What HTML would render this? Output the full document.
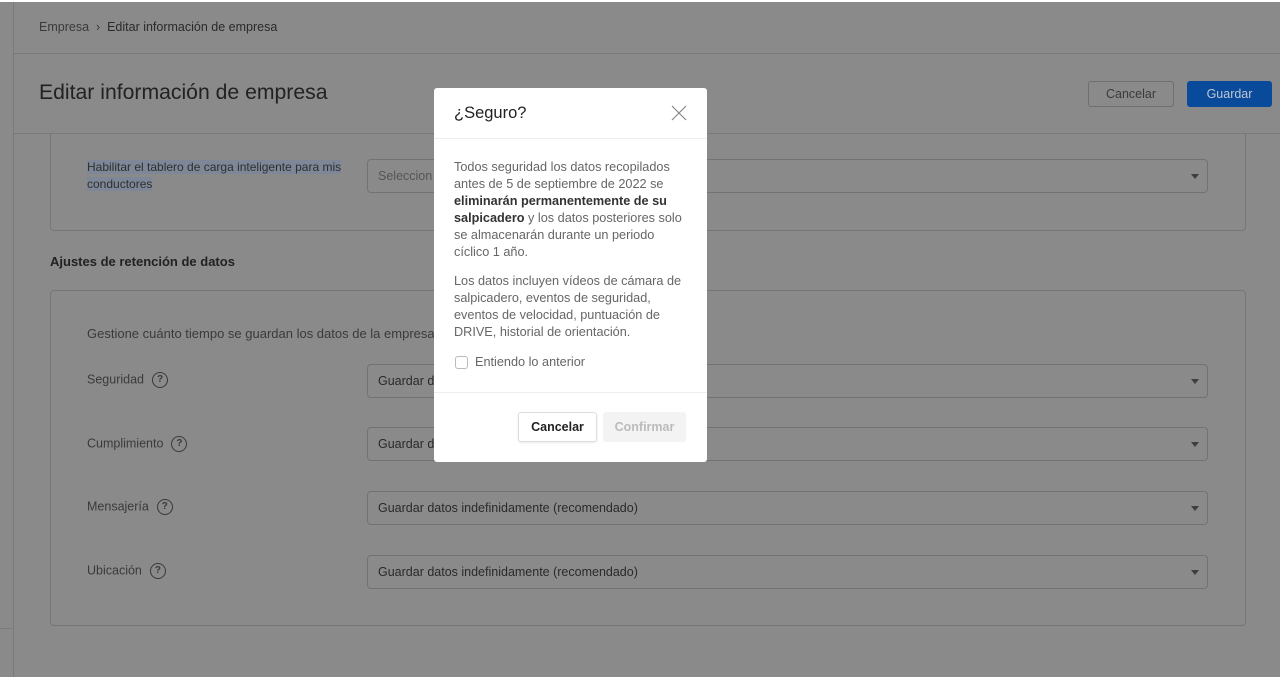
<!DOCTYPE html>
<html><head><meta charset="utf-8"><style>
*{box-sizing:border-box;margin:0;padding:0}
body{width:1280px;height:677px;overflow:hidden;background:#8a8a8a;font-family:"Liberation Sans",Arial,sans-serif;position:relative;color:#2b2b2b}
.a{position:absolute}
.line{position:absolute;background:#7a7a7a}
.card{position:absolute;border:1px solid #767676;border-radius:4px}
.sel{position:absolute;left:367px;width:841px;height:34px;border:1px solid #727272;border-radius:4px;font-size:12.5px;color:#2a2a2a;padding:0 10px;line-height:32px}
.sel:after{content:"";position:absolute;right:8px;top:14px;border-left:4px solid transparent;border-right:4px solid transparent;border-top:5px solid #3e3e3e}
.lbl{position:absolute;left:87px;font-size:12.5px;color:#3a3a3a}
.q{display:inline-block;width:16px;height:16px;border:1.3px solid #3a3a3a;border-radius:50%;font-size:10px;text-align:center;line-height:14px;font-weight:bold;vertical-align:middle;margin-left:8px}
.modal{position:absolute;left:434px;top:88px;width:273px;height:374px;background:#fff;border-radius:3px}
.mt{font-size:12.7px;color:#666;line-height:17px}
</style></head><body>
<div class="a" style="left:0;top:0;width:1280px;height:2px;background:#fff"></div>
<div class="line" style="left:13px;top:2px;width:1px;height:675px"></div>
<div class="line" style="left:13px;top:53px;width:1267px;height:1px"></div>
<div class="line" style="left:13px;top:133px;width:1267px;height:1px"></div>
<div class="line" style="left:0;top:628px;width:13px;height:1px"></div>
<div class="a" style="left:39px;top:20px;font-size:12.5px;color:#3a3a3a">Empresa &nbsp;›&nbsp; <span style="color:#2a2a2a">Editar información de empresa</span></div>
<div class="a" style="left:39px;top:81px;font-size:21.2px;color:#222">Editar información de empresa</div>
<div class="a" style="left:1088px;top:81px;width:86px;height:26px;border:1px solid #6f6f6f;border-radius:3px;font-size:12.5px;color:#3a3a3a;text-align:center;line-height:24px">Cancelar</div>
<div class="a" style="left:1187px;top:81px;width:85px;height:26px;background:#0a4a9a;border-radius:3px;font-size:12.5px;color:#bcc6d4;text-align:center;line-height:26px">Guardar</div>

<div class="card" style="left:50px;top:134px;width:1196px;height:97px;border-top:none;border-radius:0 0 4px 4px"></div>
<div class="a" style="left:87px;top:159px;font-size:12px;line-height:17px;color:#2f2f2f"><span style="background:#7d8797">Habilitar el tablero de carga inteligente para mis</span><br><span style="background:#7d8797">conductores</span></div>
<div class="sel" style="top:159px;color:#555">Seleccion</div>

<div class="a" style="left:50px;top:254px;font-size:13px;font-weight:bold;color:#222">Ajustes de retención de datos</div>
<div class="card" style="left:50px;top:290px;width:1196px;height:336px"></div>
<div class="lbl" style="top:326px;font-size:13px">Gestione cuánto tiempo se guardan los datos de la empresa. <span style="color:#1a4a8a">M</span></div>
<div class="lbl" style="top:372px">Seguridad<span class="q">?</span></div>
<div class="sel" style="top:364px">Guardar datos indefinidamente (recomendado)</div>
<div class="lbl" style="top:436px">Cumplimiento<span class="q">?</span></div>
<div class="sel" style="top:427px">Guardar datos indefinidamente (recomendado)</div>
<div class="lbl" style="top:499px">Mensajería<span class="q">?</span></div>
<div class="sel" style="top:491px">Guardar datos indefinidamente (recomendado)</div>
<div class="lbl" style="top:563px">Ubicación<span class="q">?</span></div>
<div class="sel" style="top:555px">Guardar datos indefinidamente (recomendado)</div>

<div class="modal">
<div class="a" style="left:20px;top:16px;font-size:16.5px;color:#222">¿Seguro?</div>
<svg class="a" style="left:237px;top:17px" width="16" height="16" viewBox="0 0 16 16"><path d="M1 1L15 15M15 1L1 15" stroke="#888" stroke-width="1.2"/></svg>
<div class="a" style="left:0;top:50px;width:273px;height:1px;background:#eee"></div>
<div class="a mt" style="left:20px;top:71px;width:232px">Todos seguridad los datos recopilados antes de 5 de septiembre de 2022 se <b style="color:#333">eliminarán permanentemente de su salpicadero</b> y los datos posteriores solo se almacenarán durante un periodo cíclico 1 año.</div>
<div class="a mt" style="left:20px;top:185px;width:232px">Los datos incluyen vídeos de cámara de salpicadero, eventos de seguridad, eventos de velocidad, puntuación de DRIVE, historial de orientación.</div>
<div class="a" style="left:21px;top:268px;width:13px;height:13px;border:1px solid #bbb;border-radius:3px"></div>
<div class="a mt" style="left:41px;top:266px">Entiendo lo anterior</div>
<div class="a" style="left:0;top:304px;width:273px;height:1px;background:#eee"></div>
<div class="a" style="left:84px;top:324px;width:79px;height:30px;border:1px solid #ddd;border-radius:3px;font-size:12.5px;font-weight:bold;color:#222;text-align:center;line-height:28px;box-shadow:0 1px 2px rgba(0,0,0,.08)">Cancelar</div>
<div class="a" style="left:169px;top:324px;width:83px;height:30px;background:#f3f3f3;border-radius:3px;font-size:12.5px;font-weight:bold;color:#bbb;text-align:center;line-height:30px">Confirmar</div>
</div>
</body></html>
